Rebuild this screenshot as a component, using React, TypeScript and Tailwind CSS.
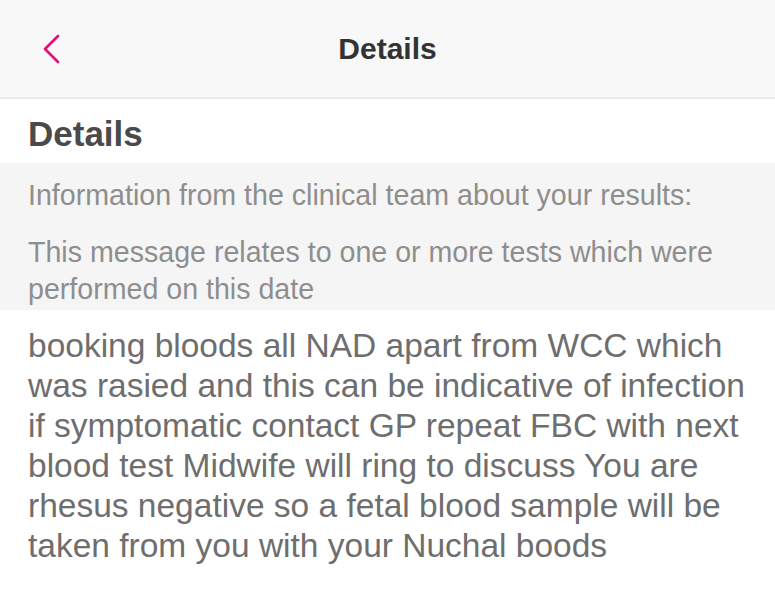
import React from 'react';

export default function App() {
    return (
        <div className="w-[775px] h-[600px] bg-white overflow-hidden" style={{ fontFamily: '"Liberation Sans", Arial, sans-serif' }}>
            {/* Nav bar */}
            <header className="relative h-[99px] bg-[#f8f8f8] border-b-2 border-[#e9e9ef] flex items-center justify-center">
                <button className="absolute left-[42px] top-[34px] text-[#ea0a72]" aria-label="Back">
                    <ChevronLeftIcon />
                </button>
                <h1 className="text-[30px] leading-[36px] font-semibold text-[#333]">
                    Details
                </h1>
            </header>

            {/* Section title */}
            <div className="h-[64px] px-[28px] pt-[15px]">
                <h2 className="text-[35px] leading-[40px] font-bold text-[#4a4a4a]">
                    Details
                </h2>
            </div>

            {/* Info */}
            <div className="bg-[#f5f5f5] px-[28px] pt-[14px] pb-[2px] text-[28.6px] leading-[37px] text-[#8e8e8e]">
                <p className="mb-[20px]">Information from the clinical team about your results:</p>
                <p>This message relates to one or more tests which were performed on this date</p>
            </div>

            {/* Message */}
            <div className="px-[28px] pt-[16px] pr-[18px] text-[33.5px] leading-[40px] text-[#6e6e6e]">
                <p>
                    booking bloods all NAD apart from WCC which was rasied and this can be indicative of infection if symptomatic contact GP repeat FBC with next blood test Midwife will ring to discuss You are rhesus negative so a fetal blood sample will be taken from you with your Nuchal boods
                </p>
            </div>
        </div>
    );
}

function ChevronLeftIcon() {
    return (
        <svg width="20" height="30" viewBox="0 0 20 30" fill="none" stroke="currentColor">
            <path strokeWidth={2.6} strokeLinecap="round" strokeLinejoin="round" d="M16 2L3 15l13 13" />
        </svg>
    );
}
